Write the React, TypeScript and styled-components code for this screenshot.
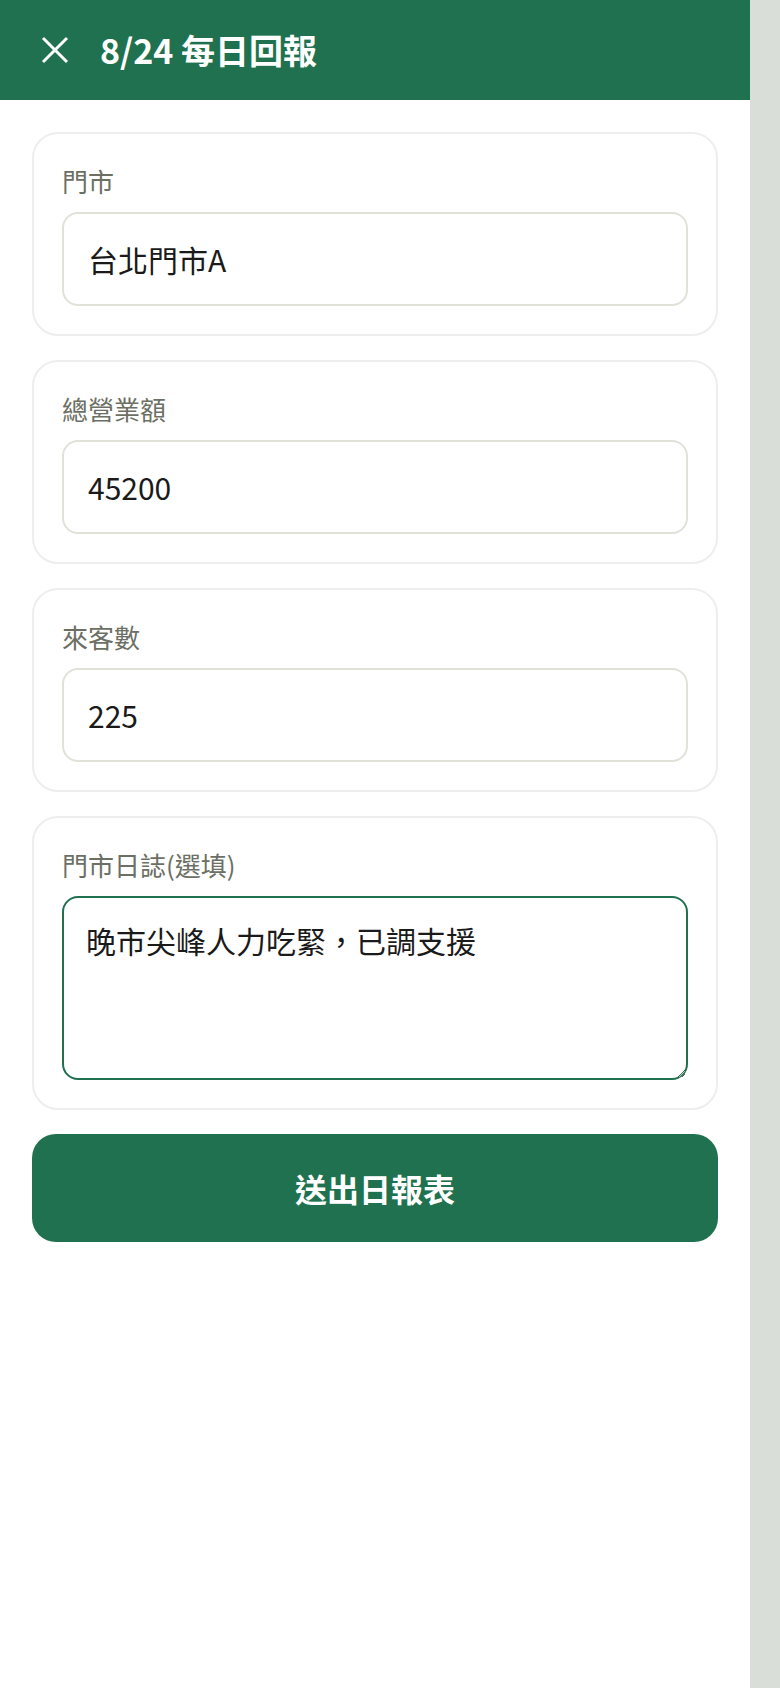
import { useState } from 'react'
import styled, { createGlobalStyle } from 'styled-components'

const GlobalStyle = createGlobalStyle`
	* {
		box-sizing: border-box;
	}

	body {
		margin: 0;
		background: #d9dfd8;
		font-family: 'Noto Sans CJK TC', 'Noto Sans', sans-serif;
	}
`

const Page = styled.div`
	width: 750px;
	min-height: 1688px;
	background: #ffffff;
`

const Header = styled.header`
	display: flex;
	align-items: center;
	gap: 30px;
	height: 100px;
	padding: 0 40px;
	background: #1f7150;
	color: #ffffff;
`

const CloseButton = styled.button`
	display: flex;
	align-items: center;
	justify-content: center;
	width: 30px;
	height: 30px;
	padding: 0;
	border: none;
	background: none;
	color: #ffffff;
	cursor: pointer;
`

const Title = styled.h1`
	margin: 0;
	font-size: 34px;
	font-weight: 700;
	line-height: 1;
`

const Form = styled.form`
	display: flex;
	flex-direction: column;
	gap: 24px;
	padding: 32px;
`

const Card = styled.div`
	display: flex;
	flex-direction: column;
	padding: 28px;
	border: 2px solid #eeeeee;
	border-radius: 26px;
	background: #ffffff;
`

const Label = styled.label`
	margin-bottom: 12px;
	font-size: 26px;
	line-height: 38px;
	color: #6c6f64;
`

const Input = styled.input`
	width: 100%;
	height: 94px;
	padding: 0 24px;
	border: 2px solid #dfe2d9;
	border-radius: 16px;
	font-family: inherit;
	font-size: 30px;
	color: #1a1a1a;
	background: #ffffff;
	outline: none;
`

const TextArea = styled.textarea<{ $focused: boolean }>`
	width: 100%;
	height: 184px;
	padding: 20px 22px;
	border: 2px solid ${({ $focused }) => ($focused ? '#1f7150' : '#dfe2d9')};
	border-radius: 16px;
	font-family: inherit;
	font-size: 30px;
	line-height: 1.5;
	color: #1a1a1a;
	background: #ffffff;
	outline: none;
	resize: vertical;
`

const SubmitButton = styled.button`
	height: 108px;
	border: none;
	border-radius: 24px;
	background: #1f7150;
	color: #ffffff;
	font-family: inherit;
	font-size: 32px;
	font-weight: 700;
	cursor: pointer;
`

function CloseIcon() {
	return (
		<svg width="28" height="28" viewBox="0 0 28 28" fill="none" stroke="currentColor" strokeWidth="3">
			<path d="M2 2L26 26M26 2L2 26" />
		</svg>
	)
}

export default function App() {
	const [store, setStore] = useState('台北門市A')
	const [sales, setSales] = useState('45200')
	const [guests, setGuests] = useState('225')
	const [note, setNote] = useState('晚市尖峰人力吃緊，已調支援')

	return (
		<>
			<GlobalStyle />
			<Page>
				<Header>
					<CloseButton type="button" aria-label="關閉">
						<CloseIcon />
					</CloseButton>
					<Title>8/24 每日回報</Title>
				</Header>
				<Form onSubmit={(e) => e.preventDefault()}>
					<Card>
						<Label htmlFor="store">門市</Label>
						<Input id="store" value={store} onChange={(e) => setStore(e.target.value)} />
					</Card>
					<Card>
						<Label htmlFor="sales">總營業額</Label>
						<Input id="sales" value={sales} onChange={(e) => setSales(e.target.value)} />
					</Card>
					<Card>
						<Label htmlFor="guests">來客數</Label>
						<Input id="guests" value={guests} onChange={(e) => setGuests(e.target.value)} />
					</Card>
					<Card>
						<Label htmlFor="note">門市日誌(選填)</Label>
						<TextArea id="note" $focused value={note} onChange={(e) => setNote(e.target.value)} />
					</Card>
					<SubmitButton type="submit">送出日報表</SubmitButton>
				</Form>
			</Page>
		</>
	)
}
